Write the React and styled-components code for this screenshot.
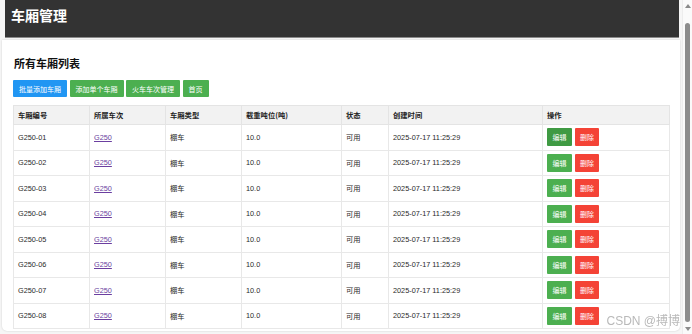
import React from 'react';
import styled, { createGlobalStyle } from 'styled-components';

const GlobalStyle = createGlobalStyle`
  html, body {
    margin: 0;
    padding: 0;
    overflow: hidden;
  }
  body {
    font-family: "Liberation Sans", Arial, "Noto Sans CJK SC", sans-serif;
    color: #333;
    background: #f6f6f6;
  }
`;

const Shell = styled.div`
  display: flex;
  height: 100vh;
  background: #f6f6f6;
`;

const Main = styled.div`
  flex: 1;
  min-width: 0;
  overflow: hidden;
`;

const ScrollTrack = styled.div`
  width: 10px;
  display: flex;
  flex-direction: column;
  align-items: center;
  background: #fafafa;
  border-left: 1px solid #ededed;
  box-sizing: border-box;
`;

const ScrollArrow = styled.div`
  height: 11px;
  display: flex;
  align-items: center;
  justify-content: center;
`;

const ScrollThumb = styled.div`
  flex: 1;
  width: 5px;
  margin: 12px 0 1px;
  border-radius: 3px;
  background: #8c8c8c;
`;

const Header = styled.header`
  height: 38px;
  margin: 0 3px 0 5px;
  padding: 0 0 8px 6px;
  box-sizing: border-box;
  display: flex;
  align-items: center;
  background: #333;
  border-bottom: 1px solid #8a8a8a;
  color: #fff;
`;

const HeaderTitle = styled.h1`
  margin: 0;
  font-size: 14px;
  font-weight: bold;
  font-family: "Noto Sans CJK SC", sans-serif;
`;

const Container = styled.main`
  margin: 2px 2px 0 2px;
  padding: 16px 10px 2px 11px;
  background: #fff;
  border-radius: 0 0 5px 5px;
  box-shadow: 0 0 2px rgba(0, 0, 0, 0.18);
`;

const SectionTitle = styled.h2`
  margin: 0 0 10px 1px;
  font-size: 11px;
  line-height: 14px;
  font-weight: bold;
  color: #111;
  font-family: "Noto Sans CJK SC", sans-serif;
`;

const Toolbar = styled.div`
  display: flex;
  gap: 2.5px;
  margin-bottom: 8px;
`;

const ToolButton = styled.button`
  height: 17px;
  padding: 0 6px;
  border: none;
  border-radius: 1px;
  background: ${p => (p.$primary ? '#2196f3' : '#4caf50')};
  color: #fff;
  font-size: 7px;
  font-family: "Noto Sans CJK SC", sans-serif;
  cursor: pointer;
`;

const Table = styled.table`
  width: 656px;
  table-layout: fixed;
  border-collapse: collapse;
  font-size: 7.3px;
`;

const Th = styled.th`
  height: 18px;
  padding: 0 4px;
  text-align: left;
  background: #f2f2f2;
  border: 1px solid #e4e4e4;
  font-weight: bold;
  color: #222;
  font-family: "Noto Sans CJK SC", sans-serif;
`;

const Tr = styled.tr`
  height: 25.5px;
`;

const Td = styled.td`
  padding: 0 4px;
  border: 1px solid #e8e8e8;
  color: #2a2a2a;
  font-family: ${p => (p.$cjk ? '"Noto Sans CJK SC", sans-serif' : '"Liberation Sans", Arial, sans-serif')};
`;

const TrainLink = styled.a`
  color: #6b3fa0;
  text-decoration: underline;
`;

const Actions = styled.div`
  display: flex;
  gap: 3px;
`;

const ActionButton = styled.button`
  width: ${p => (p.$danger ? '24px' : '25px')};
  height: 18px;
  padding: 0;
  border: none;
  border-radius: 1px;
  background: ${p => (p.$danger ? '#f44336' : p.$active ? '#3f9a43' : '#4caf50')};
  color: #fff;
  font-size: 7px;
  font-family: "Noto Sans CJK SC", sans-serif;
  cursor: pointer;
`;

const Watermark = styled.div`
  position: fixed;
  right: 12px;
  bottom: 6px;
  font-size: 12px;
  color: #b9b9b9;
  font-family: "Liberation Sans", "Noto Sans CJK SC", sans-serif;
  text-shadow: 0 0 2px #fff;
  pointer-events: none;
`;

const Arrow = ({ down }) => (
  <svg width="6" height="4" viewBox="0 0 6 4">
    <path d={down ? 'M0 0 L6 0 L3 4 Z' : 'M0 4 L6 4 L3 0 Z'} fill="#8a8a8a" />
  </svg>
);

const columns = [
  { title: '车厢编号', width: 76 },
  { title: '所属车次', width: 76 },
  { title: '车厢类型', width: 76 },
  { title: '载重吨位(吨)', width: 100 },
  { title: '状态', width: 47 },
  { title: '创建时间', width: 154 },
  { title: '操作', width: 127 }
];

const carriages = Array.from({ length: 8 }, (_, i) => ({
  id: `G250-0${i + 1}`,
  train: 'G250',
  type: '棚车',
  load: '10.0',
  status: '可用',
  created: '2025-07-17 11:25:29'
}));

export default function App() {
  return (
    <>
      <GlobalStyle />
      <Shell>
        <Main>
          <Header>
            <HeaderTitle>车厢管理</HeaderTitle>
          </Header>
          <Container>
            <SectionTitle>所有车厢列表</SectionTitle>
            <Toolbar>
              <ToolButton $primary>批量添加车厢</ToolButton>
              <ToolButton>添加单个车厢</ToolButton>
              <ToolButton>火车车次管理</ToolButton>
              <ToolButton>首页</ToolButton>
            </Toolbar>
            <Table>
              <colgroup>
                {columns.map(c => (
                  <col key={c.title} style={{ width: c.width }} />
                ))}
              </colgroup>
              <thead>
                <tr>
                  {columns.map(c => (
                    <Th key={c.title}>{c.title}</Th>
                  ))}
                </tr>
              </thead>
              <tbody>
                {carriages.map((row, i) => (
                  <Tr key={row.id}>
                    <Td>{row.id}</Td>
                    <Td>
                      <TrainLink href="#">{row.train}</TrainLink>
                    </Td>
                    <Td $cjk>{row.type}</Td>
                    <Td>{row.load}</Td>
                    <Td $cjk>{row.status}</Td>
                    <Td>{row.created}</Td>
                    <Td>
                      <Actions>
                        <ActionButton $active={i === 0}>编辑</ActionButton>
                        <ActionButton $danger>删除</ActionButton>
                      </Actions>
                    </Td>
                  </Tr>
                ))}
              </tbody>
            </Table>
          </Container>
        </Main>
        <ScrollTrack>
          <ScrollArrow>
            <Arrow />
          </ScrollArrow>
          <ScrollThumb />
          <ScrollArrow>
            <Arrow down />
          </ScrollArrow>
        </ScrollTrack>
      </Shell>
      <Watermark>CSDN @搏博</Watermark>
    </>
  );
}
